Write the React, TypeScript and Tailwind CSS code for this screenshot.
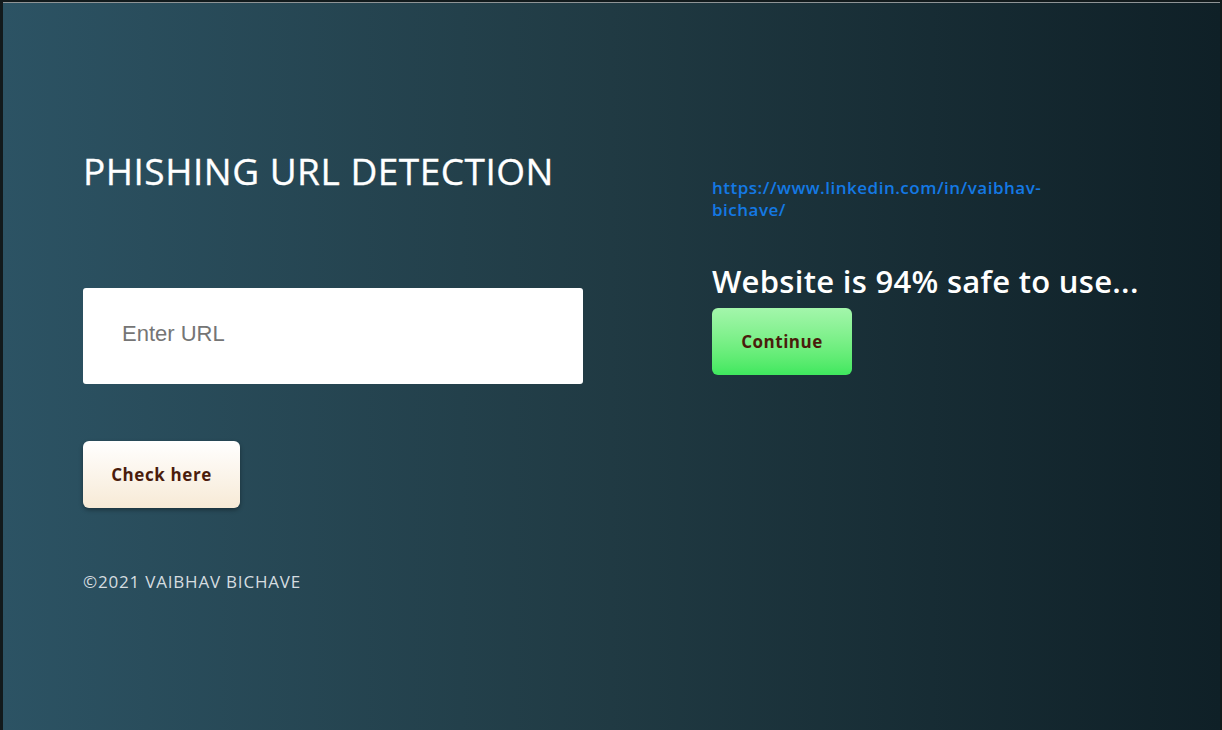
export default function App() {
  return (
    <div className="h-[730px] w-[1222px] overflow-hidden bg-[#121a1c] pt-[2px] pl-[3px] pr-[2px]">
      <div
        className="flex h-full w-full border-t border-[#8f9496] bg-gradient-to-r from-[#2c5364] via-[#203a43] to-[#0f2027] pl-[80px]"
        style={{ fontFamily: '"Open Sans", "Noto Sans", sans-serif' }}
      >
        <div className="flex w-[629px] shrink-0 flex-col pt-[144px]">
          <h1 className="text-[37px] leading-[48px] font-normal tracking-[0.5px] text-white [-webkit-text-stroke:0.3px_white]">
            PHISHING URL DETECTION
          </h1>
          <input
            type="text"
            placeholder="Enter URL"
            className="mt-[93px] h-[96px] w-[500px] rounded-[3px] bg-white pl-[39px] pb-[4px] text-[22px] text-[#333] outline-none placeholder:text-[#757575]"
            style={{ fontFamily: '"Liberation Sans", Arial, sans-serif' }}
          />
          <button className="mt-[57px] h-[67px] w-[157px] cursor-pointer rounded-[6px] bg-gradient-to-b from-white to-[#f7ead6] text-[17px] font-bold tracking-[0.6px] text-[#4a1c0c] shadow-[0_2px_4px_rgba(0,0,0,0.35)]">
            Check here
          </button>
          <p className="mt-[61px] text-[17px] tracking-[0.8px] text-[#d6dde0]">©2021 VAIBHAV BICHAVE</p>
        </div>
        <div className="flex flex-col pt-[174px]">
          <a
            href="https://www.linkedin.com/in/vaibhav-bichave/"
            className="w-[345px] break-words text-[17px] leading-[22px] font-semibold tracking-[0.5px] text-[#1479e4]"
          >
            https://www.linkedin.com/in/vaibhav-bichave/
          </a>
          <h2 className="mt-[40px] text-[31px] leading-[40px] font-semibold tracking-[0.3px] text-white">Website is 94% safe to use...</h2>
          <button className="mt-[7px] h-[67px] w-[140px] cursor-pointer rounded-[6px] bg-gradient-to-b from-[#a3f6ab] to-[#3ee85e] text-[17px] font-bold tracking-[0.5px] text-[#4a1c0c]">
            Continue
          </button>
        </div>
      </div>
    </div>
  )
}
